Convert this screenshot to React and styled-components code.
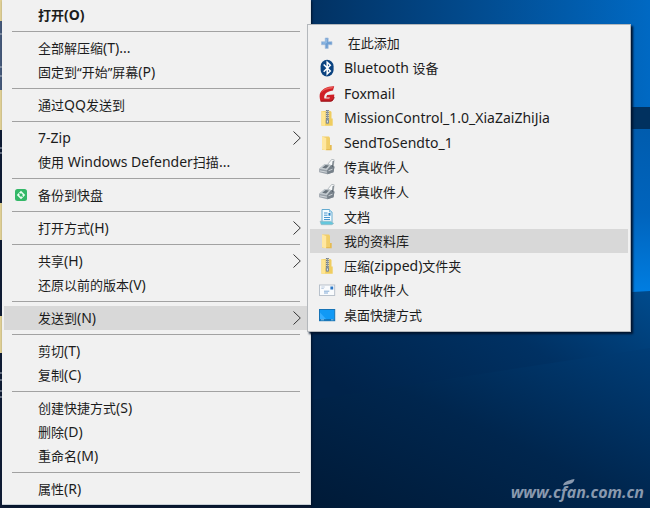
import React from "react";
import styled, { createGlobalStyle, css } from "styled-components";

const GlobalStyle = createGlobalStyle`
  * { box-sizing: border-box; }
  body {
    margin: 0;
    background: #001f41;
    font-family: "Noto Sans", "Noto Sans CJK SC", sans-serif;
    font-size: 13px;
    color: #1c1c1c;
  }
`;

const Desktop = styled.main`
  position: relative;
  display: grid;
  grid-template-columns: 309fr 320fr 19fr;
  align-items: start;
  min-height: 100vh;
  padding: 0 0 3px 2px;
  overflow: hidden;
`;

const WallpaperArt = styled.svg`
  position: absolute;
  inset: 0;
  width: 100%;
  height: 100%;
`;

const Panel = styled.ul`
  position: relative;
  display: flex;
  flex-direction: column;
  list-style: none;
  margin: 0;
  background: #f1f1f1;
`;

const ContextMenu = styled(Panel)`
  padding: 3px 2px;
  border-right: 1px solid #dfe3e6;
  border-bottom: 1px solid #c9d0d6;
  box-shadow: 1px 1px 2px #00122a;
`;

const SubMenu = styled(Panel)`
  margin: 24px 0 0 -4px;
  min-height: 308px;
  padding: 6px 2px 4px;
  border: 1px solid #b4b8bc;
  box-shadow: 2px 2px 2px #00142e;
`;

const Row = styled.li`
  display: flex;
  flex: 1 0 24px;
  ${(p) => p.$spaced && css`padding-top: 2px;`}
`;

const Item = styled.button`
  display: grid;
  grid-template-columns: ${(p) => (p.$sub ? "24px 1fr" : "23px 1fr 8px")};
  column-gap: ${(p) => (p.$sub ? "2px" : "0")};
  align-items: center;
  width: 100%;
  min-height: 24px;
  padding: ${(p) => (p.$sub ? "0 8px 0 8px" : "0 7px 0 11px")};
  border: 0;
  background: ${(p) => (p.$active ? "#d8d8d8" : "transparent")};
  color: inherit;
  font: inherit;
  font-weight: ${(p) => (p.$strong ? 700 : 400)};
  line-height: 20px;
  text-align: left;
  white-space: pre;
`;

const Latin = styled.span`
  font-size: 14px;
`;

const IconSlot = styled.span`
  display: flex;
  align-items: center;
`;

const Divider = styled.li`
  height: 1px;
  margin: 4px 8px;
  background: #a2a2a2;
`;

const Watermark = styled.a`
  position: absolute;
  right: 6px;
  bottom: 6px;
  color: #8999ae;
  font: italic 700 16px/20px "Open Sans", sans-serif;
  text-decoration: none;
`;

const Leaf = styled.svg`
  position: absolute;
  left: 52px;
  top: -3px;
`;

const Wallpaper = () => (
  <WallpaperArt viewBox="0 0 650 508" preserveAspectRatio="none" aria-hidden="true">
    <defs>
      <linearGradient id="sky" x1="0" x2="1">
        <stop offset="0.48" stopColor="#023263" />
        <stop offset="0.75" stopColor="#024d92" />
        <stop offset="1" stopColor="#0069c3" />
      </linearGradient>
      <linearGradient id="pane" x1="0" x2="0" y1="0" y2="1">
        <stop offset="0" stopColor="#005cae" />
        <stop offset="0.5" stopColor="#0064bd" />
        <stop offset="1" stopColor="#0080e4" />
      </linearGradient>
      <linearGradient id="glow" x1="0" x2="1" y1="0.6" y2="0">
        <stop offset="0" stopColor="#00234a" />
        <stop offset="0.55" stopColor="#003163" />
        <stop offset="1" stopColor="#004b8d" />
      </linearGradient>
      <linearGradient id="floor" x1="0" x2="1" y1="1" y2="0">
        <stop offset="0" stopColor="#001a37" />
        <stop offset="0.5" stopColor="#00264e" />
        <stop offset="1" stopColor="#003d77" />
      </linearGradient>
    </defs>
    <rect width="650" height="508" fill="url(#sky)" />
    <rect x="600" y="107" width="50" height="22" fill="#01315f" />
    <rect x="600" y="129" width="50" height="170" fill="url(#pane)" />
    <path d="M310 310 L650 291 V420 H310z" fill="url(#glow)" />
    <path d="M310 400 L650 348 V508 H310z" fill="url(#floor)" />
    <rect width="311" height="508" fill="#101c34" />
    <path d="M0 0h3v21h-3z M0 90h3v40h-3z M0 203h3v37h-3z M0 316h3v37h-3z" fill="#dfcf94" />
    <path d="M0 21h3v69h-3z" fill="#465a7a" />
    <path d="M0 34h3M0 67h3M0 76h3M0 148h3M0 153h3M0 373h3M0 380h3M0 391h3M0 397h3" stroke="#b8c0cc" />
  </WallpaperArt>
);

const Chevron = () => (
  <svg width="8" height="16" viewBox="0 0 8 16" fill="none" stroke="#333" aria-hidden="true">
    <path d="M0.5 1.5 7.3 8 0.5 14.5" />
  </svg>
);

const BackupIcon = () => (
  <svg width="12" height="12" viewBox="0 0 12 12" aria-hidden="true">
    <rect width="12" height="12" rx="2.5" fill="#34b868" />
    <path d="M6 1.8 10.2 6 6 10.2 1.8 6z" fill="#e9fff0" />
    <path d="M6 4 8 6 6 8 4 6z" fill="#34b868" />
    <path d="M3.8 3.8 5 5M7 7 8.2 8.2" stroke="#34b868" strokeWidth="0.8" />
  </svg>
);

const Icon = ({ children }) => (
  <svg width="18" height="18" viewBox="0 0 18 18" aria-hidden="true">{children}</svg>
);

const PlusIcon = () => (
  <Icon>
    <path d="M7.2 4h3v3.7H14v3h-3.8v3.8h-3v-3.8H3.5v-3h3.7z" fill="#6e9fd2" stroke="#a6bfdc" strokeWidth="0.7" />
    <path d="M8.2 5v4H4.5" fill="none" stroke="#9dc4ec" />
  </Icon>
);

const BluetoothIcon = () => (
  <Icon>
    <rect x="2.6" y="0.8" width="13" height="16.6" rx="6.5" fill="#0b4380" />
    <path d="M5.7 5.5 12.3 12 9.2 15V3.2L12.3 6.2 5.7 12.7" fill="none" stroke="#fff" strokeWidth="1.5" />
  </Icon>
);

const FoxmailIcon = () => (
  <Icon>
    <path d="M16.2 1.2C9.5 1 3.5 3.8 1.8 9c-.5 3 .2 5.5.8 7.6h10.4c2.2-.5 3.2-3 3.3-7.2l-7.2.6-1 2.4h3.9l-.7 1.2H6.4C5.6 9.8 7.8 6.4 15 5.4z" fill="#cf1f26" />
    <path d="M15.2 1.7C9 2 4.5 4.2 2.8 8c3-3.3 7-4 11.6-4.6z" fill="#ea5954" />
    <path d="M2.8 16.1h10c2-.5 3-2 3.3-4" fill="none" stroke="#8f1118" />
  </Icon>
);

const FolderIcon = () => (
  <Icon>
    <path d="M4 2.5h7l1 1.2v12H4z" fill="#f1ce69" />
    <path d="M4 2.5 8.2 4v12.5L4 15.2z" fill="#ffe7a0" />
    <path d="M12 11h1.7v5.2H8.2V15H12z" fill="#e6bb52" />
  </Icon>
);

const ZipIcon = () => (
  <Icon>
    <path d="M3.5 2h9l1 1v6.5h1.2v7.2H3.5z" fill="#efcd60" />
    <path d="M3.5 2 7.2 3v13.7H3.5z" fill="#ffe590" />
    <path d="M9.4 1v11" stroke="#dcd5b4" strokeWidth="3.4" />
    <path d="M9.4 1v11" stroke="#66737e" strokeWidth="2.6" strokeDasharray="1 1" />
    <path d="M9.4 1v11" stroke="#8e9aa3" strokeWidth="1" />
    <rect x="7.8" y="10" width="3.2" height="4.8" rx="1" fill="#7e8b95" />
    <path d="M9.4 11.5v2" stroke="#e8edf0" />
  </Icon>
);

const FaxIcon = () => (
  <Icon>
    <path d="m9.5 6.5 4.2-5.1 2.5.4-1 6.5z" fill="#f7f9fa" stroke="#9da5ab" strokeWidth="0.7" />
    <path d="m1.2 10.8 5.5-4.8 8 1.2 1.8 1.6-1 5.4-6 2-8.3-2z" fill="#98a0a8" />
    <path d="m1.2 10.8 5.5-4.8 6.6 1-4.2 5.3z" fill="#c3cacf" />
    <path d="m4.2 9.7 3.4-2.7 3.4.5-3 3z" fill="#69737c" />
    <path d="m9.1 12.3 4.2-5.3 3.2 1.8-1 5.4-6 2z" fill="#77818a" />
    <path d="m2 12.9 6.8 1.3M10.5 12.7l4-1.5" stroke="#dfe4e7" strokeWidth="0.8" />
    <path d="m15.2 3-.6 6" stroke="#56616a" />
  </Icon>
);

const DocumentIcon = () => (
  <Icon>
    <path d="M4 1.5h7.5L14 4v10.5H4z" fill="#f2fbff" stroke="#65abd0" />
    <path d="M11.5 1.5V4H14" fill="#c7e7f5" stroke="#65abd0" strokeWidth="0.7" />
    <path d="M6 5h3.5M6 7.2h3.5M6 9.5h6M6 11.5h6" stroke="#4695ce" />
    <path d="M10.5 5h2v2.7h-2z" fill="#247fc1" />
    <path d="M2 13.2h10.5l3.2 2.2-1.7 1.3H3.2z" fill="#64c7dd" stroke="#99b4be" strokeWidth="0.6" />
  </Icon>
);

const MailIcon = () => (
  <Icon>
    <rect x="1.5" y="4" width="15.2" height="10.5" fill="#f9fbfd" stroke="#b3bcc7" strokeWidth="0.9" />
    <rect x="12.4" y="5.5" width="2.8" height="3" fill="#2c78c7" />
    <path d="M3.3 6h3.5M3.3 7.5h2.5" stroke="#a8bcd5" strokeWidth="0.7" />
    <path d="M6 10.2h5.3M6 12h4" stroke="#76a2d1" strokeWidth="0.9" />
  </Icon>
);

const ScreenIcon = () => (
  <Icon>
    <rect x="1.5" y="3.5" width="15.2" height="11.2" fill="#1199f5" stroke="#1673b6" />
    <path d="M2 14V6.5L9 14z" fill="#35adff" />
    <path d="M2 13.8h14.2" stroke="#0d65a8" />
    <path d="M3 13.8h3M13 13.8h2.5" stroke="#a8dcff" strokeWidth="0.7" />
  </Icon>
);

const groups = [
  [{ text: "打开(O)", strong: true }],
  [{ text: "全部解压缩(T)..." }, { text: "固定到“开始”屏幕(P)" }],
  [{ text: "通过QQ发送到" }],
  [{ text: "7-Zip", more: true }, { text: "使用 Windows Defender扫描..." }],
  [{ text: "备份到快盘", icon: BackupIcon }],
  [{ text: "打开方式(H)", more: true }],
  [{ text: "共享(H)", more: true }, { text: "还原以前的版本(V)" }],
  [{ text: "发送到(N)", more: true, active: true }],
  [{ text: "剪切(T)" }, { text: "复制(C)" }],
  [{ text: "创建快捷方式(S)" }, { text: "删除(D)" }, { text: "重命名(M)" }],
  [{ text: "属性(R)" }],
];

const targets = [
  { text: " 在此添加", icon: PlusIcon },
  { text: "Bluetooth 设备", icon: BluetoothIcon },
  { text: "Foxmail", icon: FoxmailIcon, spaced: true },
  { text: "MissionControl_1.0_XiaZaiZhiJia", icon: ZipIcon },
  { text: "SendToSendto_1", icon: FolderIcon },
  { text: "传真收件人", icon: FaxIcon },
  { text: "传真收件人", icon: FaxIcon },
  { text: "文档", icon: DocumentIcon },
  { text: "我的资料库", icon: FolderIcon, active: true },
  { text: "压缩(zipped)文件夹", icon: ZipIcon },
  { text: "邮件收件人", icon: MailIcon },
  { text: "桌面快捷方式", icon: ScreenIcon },
];

// Latin runs are set one size up so they balance with the Chinese glyphs.
const Label = ({ text }) => (
  <span>
    {text.split(/([\x20-\x7e]+)/).filter(Boolean).map((run, i) =>
      /^[\x20-\x7e]/.test(run) ? <Latin key={i}>{run}</Latin> : run
    )}
  </span>
);

function MenuRow({ text, icon: Glyph, more, active, strong, spaced, sub }) {
  return (
    <Row role="none" $spaced={spaced}>
      <Item type="button" role="menuitem" aria-haspopup={more ? "menu" : undefined} $active={active} $strong={strong} $sub={sub}>
        <IconSlot>{Glyph && <Glyph />}</IconSlot>
        <Label text={text} />
        {more && <Chevron />}
      </Item>
    </Row>
  );
}

export default function App() {
  return (
    <>
      <GlobalStyle />
      <Desktop>
        <Wallpaper />
        <ContextMenu role="menu" aria-label="文件">
          {groups.map((items, g) => (
            <React.Fragment key={g}>
              {g > 0 && <Divider role="separator" />}
              {items.map((item) => <MenuRow key={item.text} {...item} />)}
            </React.Fragment>
          ))}
        </ContextMenu>
        <SubMenu role="menu" aria-label="发送到">
          {targets.map((item, i) => <MenuRow key={i} {...item} sub />)}
        </SubMenu>
        <Watermark href="#cfan">
          www.cfan.com.cn
          <Leaf width="12" height="7" viewBox="0 0 12 7" fill="#8999ae" aria-hidden="true">
            <path d="M0 6.5C1 2.5 4 1.7 11.5 0 11 4.5 7 5 0 6.5z" />
          </Leaf>
        </Watermark>
      </Desktop>
    </>
  );
}
